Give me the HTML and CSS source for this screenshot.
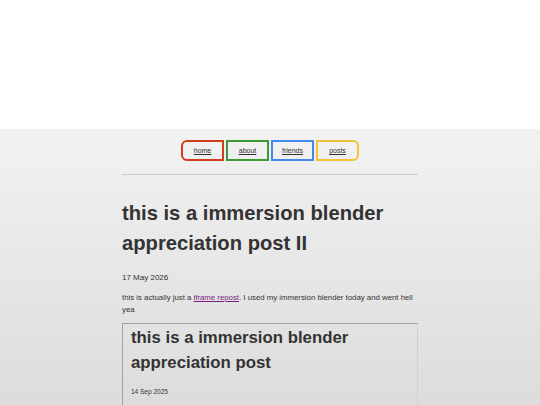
FILE: index.html
```html
<!DOCTYPE html>
<html>
<head>
<meta charset="utf-8">
<link rel="stylesheet" href="styles.css">
</head>
<body>
<div class="top"></div>
<div class="page">
  <nav class="nav">
    <a class="btn home" href="#">home</a>
    <a class="btn about" href="#">about</a>
    <a class="btn friends" href="#">friends</a>
    <a class="btn posts" href="#">posts</a>
  </nav>
  <main class="content">
    <hr class="rule">
    <h1 class="title">this is a immersion blender appreciation post II</h1>
    <p class="date">17 May 2026</p>
    <p class="text">this is actually just a <a class="link" href="#">iframe repost</a>. I used my immersion blender today and went hell yea</p>
    <div class="frame">
      <h2 class="ftitle">this is a immersion blender appreciation post</h2>
      <p class="fdate">14 Sep 2025</p>
    </div>
  </main>
</div>
</body>
</html>
```
FILE: styles.css
```css
html, body {
  margin: 0;
  padding: 0;
  height: 100%;
  overflow: hidden;
  font-family: "Liberation Sans", Arial, sans-serif;
  color: #333;
}
.top {
  height: 129px;
  background: #fff;
}
.page {
  height: 276px;
  background: linear-gradient(#f2f2f2, #dcdcdc);
  overflow: hidden;
}
.nav {
  display: flex;
  justify-content: center;
  gap: 2px;
  padding-top: 11px;
}
.btn {
  box-sizing: border-box;
  width: 43px;
  height: 21px;
  display: flex;
  align-items: center;
  justify-content: center;
  font-size: 7px;
  color: #333;
  text-decoration: underline;
  border: 2px solid;
}
.home { border-color: #d13b20; border-radius: 6px 0 0 6px; }
.about { border-color: #3c9b34; }
.friends { border-color: #4688ee; }
.posts { border-color: #f3c23c; border-radius: 0 6px 6px 0; }
.content {
  width: 296px;
  margin: 0 auto;
}
.rule {
  margin: 13px 0 0;
  border: 0;
  border-top: 1px solid #c8c8c8;
}
.title {
  margin: 23px 0 0;
  font-size: 20.2px;
  line-height: 30px;
  font-weight: bold;
  color: #333;
}
.date {
  margin: 14px 0 0;
  font-size: 8px;
  line-height: 12px;
}
.text {
  margin: 8px 0 0;
  font-size: 7.8px;
  line-height: 12px;
}
.link { color: #7a1d7a; }
.frame {
  margin-top: 7px;
  height: 120px;
  border: 1px solid #a0a0a0;
  border-right-color: #d0d0d0;
  padding: 0 8px;
}
.ftitle {
  margin: 1px 0 0;
  font-size: 16.8px;
  line-height: 25px;
  font-weight: bold;
  color: #333;
}
.fdate {
  margin: 12px 0 0;
  font-size: 6.5px;
  line-height: 10px;
}
```
